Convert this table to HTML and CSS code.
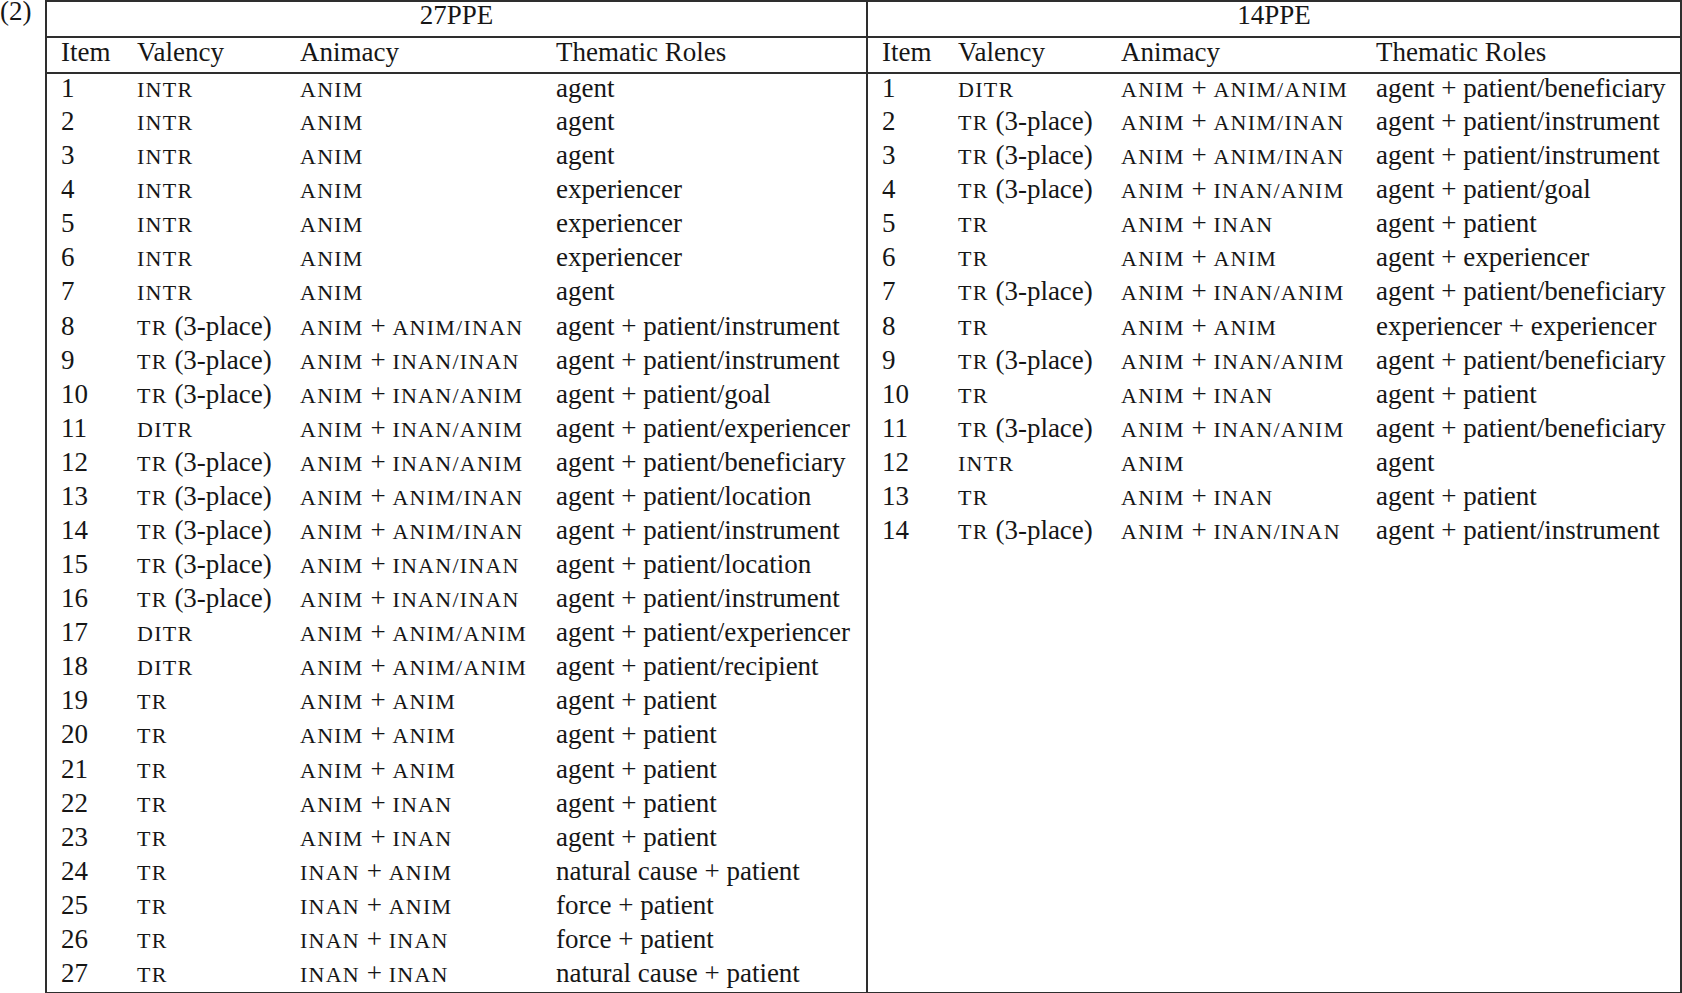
FILE: index.html
```html
<!DOCTYPE html>
<html lang="en">
<head>
<meta charset="utf-8">
<title>Table (2)</title>
<link rel="stylesheet" href="styles.css">
</head>
<body>
<div class="example">
  <div class="label">(2)</div>
  <table class="data">
    <colgroup>
      <col class="c-item">
      <col class="c-val">
      <col class="c-anim">
      <col class="c-role-l">
      <col class="c-item">
      <col class="c-val">
      <col class="c-anim-r">
      <col class="c-role-r">
    </colgroup>
    <thead>
      <tr class="group">
        <th colspan="4" class="split">27PPE</th>
        <th colspan="4">14PPE</th>
      </tr>
      <tr class="heads">
        <th class="first">Item</th><th>Valency</th><th>Animacy</th><th class="split">Thematic Roles</th>
        <th class="first">Item</th><th>Valency</th><th>Animacy</th><th>Thematic Roles</th>
      </tr>
    </thead>
    <tbody>
      <tr><td class="first">1</td><td><span class="sc">INTR</span></td><td><span class="sc">ANIM</span></td><td class="split">agent</td>
          <td class="first">1</td><td><span class="sc">DITR</span></td><td><span class="sc">ANIM</span> + <span class="sc">ANIM/ANIM</span></td><td>agent + patient/beneficiary</td></tr>
      <tr><td class="first">2</td><td><span class="sc">INTR</span></td><td><span class="sc">ANIM</span></td><td class="split">agent</td>
          <td class="first">2</td><td><span class="sc">TR</span> (3-place)</td><td><span class="sc">ANIM</span> + <span class="sc">ANIM/INAN</span></td><td>agent + patient/instrument</td></tr>
      <tr><td class="first">3</td><td><span class="sc">INTR</span></td><td><span class="sc">ANIM</span></td><td class="split">agent</td>
          <td class="first">3</td><td><span class="sc">TR</span> (3-place)</td><td><span class="sc">ANIM</span> + <span class="sc">ANIM/INAN</span></td><td>agent + patient/instrument</td></tr>
      <tr><td class="first">4</td><td><span class="sc">INTR</span></td><td><span class="sc">ANIM</span></td><td class="split">experiencer</td>
          <td class="first">4</td><td><span class="sc">TR</span> (3-place)</td><td><span class="sc">ANIM</span> + <span class="sc">INAN/ANIM</span></td><td>agent + patient/goal</td></tr>
      <tr><td class="first">5</td><td><span class="sc">INTR</span></td><td><span class="sc">ANIM</span></td><td class="split">experiencer</td>
          <td class="first">5</td><td><span class="sc">TR</span></td><td><span class="sc">ANIM</span> + <span class="sc">INAN</span></td><td>agent + patient</td></tr>
      <tr><td class="first">6</td><td><span class="sc">INTR</span></td><td><span class="sc">ANIM</span></td><td class="split">experiencer</td>
          <td class="first">6</td><td><span class="sc">TR</span></td><td><span class="sc">ANIM</span> + <span class="sc">ANIM</span></td><td>agent + experiencer</td></tr>
      <tr><td class="first">7</td><td><span class="sc">INTR</span></td><td><span class="sc">ANIM</span></td><td class="split">agent</td>
          <td class="first">7</td><td><span class="sc">TR</span> (3-place)</td><td><span class="sc">ANIM</span> + <span class="sc">INAN/ANIM</span></td><td>agent + patient/beneficiary</td></tr>
      <tr><td class="first">8</td><td><span class="sc">TR</span> (3-place)</td><td><span class="sc">ANIM</span> + <span class="sc">ANIM/INAN</span></td><td class="split">agent + patient/instrument</td>
          <td class="first">8</td><td><span class="sc">TR</span></td><td><span class="sc">ANIM</span> + <span class="sc">ANIM</span></td><td>experiencer + experiencer</td></tr>
      <tr><td class="first">9</td><td><span class="sc">TR</span> (3-place)</td><td><span class="sc">ANIM</span> + <span class="sc">INAN/INAN</span></td><td class="split">agent + patient/instrument</td>
          <td class="first">9</td><td><span class="sc">TR</span> (3-place)</td><td><span class="sc">ANIM</span> + <span class="sc">INAN/ANIM</span></td><td>agent + patient/beneficiary</td></tr>
      <tr><td class="first">10</td><td><span class="sc">TR</span> (3-place)</td><td><span class="sc">ANIM</span> + <span class="sc">INAN/ANIM</span></td><td class="split">agent + patient/goal</td>
          <td class="first">10</td><td><span class="sc">TR</span></td><td><span class="sc">ANIM</span> + <span class="sc">INAN</span></td><td>agent + patient</td></tr>
      <tr><td class="first">11</td><td><span class="sc">DITR</span></td><td><span class="sc">ANIM</span> + <span class="sc">INAN/ANIM</span></td><td class="split">agent + patient/experiencer</td>
          <td class="first">11</td><td><span class="sc">TR</span> (3-place)</td><td><span class="sc">ANIM</span> + <span class="sc">INAN/ANIM</span></td><td>agent + patient/beneficiary</td></tr>
      <tr><td class="first">12</td><td><span class="sc">TR</span> (3-place)</td><td><span class="sc">ANIM</span> + <span class="sc">INAN/ANIM</span></td><td class="split">agent + patient/beneficiary</td>
          <td class="first">12</td><td><span class="sc">INTR</span></td><td><span class="sc">ANIM</span></td><td>agent</td></tr>
      <tr><td class="first">13</td><td><span class="sc">TR</span> (3-place)</td><td><span class="sc">ANIM</span> + <span class="sc">ANIM/INAN</span></td><td class="split">agent + patient/location</td>
          <td class="first">13</td><td><span class="sc">TR</span></td><td><span class="sc">ANIM</span> + <span class="sc">INAN</span></td><td>agent + patient</td></tr>
      <tr><td class="first">14</td><td><span class="sc">TR</span> (3-place)</td><td><span class="sc">ANIM</span> + <span class="sc">ANIM/INAN</span></td><td class="split">agent + patient/instrument</td>
          <td class="first">14</td><td><span class="sc">TR</span> (3-place)</td><td><span class="sc">ANIM</span> + <span class="sc">INAN/INAN</span></td><td>agent + patient/instrument</td></tr>
      <tr><td class="first">15</td><td><span class="sc">TR</span> (3-place)</td><td><span class="sc">ANIM</span> + <span class="sc">INAN/INAN</span></td><td class="split">agent + patient/location</td>
          <td class="first"></td><td></td><td></td><td></td></tr>
      <tr><td class="first">16</td><td><span class="sc">TR</span> (3-place)</td><td><span class="sc">ANIM</span> + <span class="sc">INAN/INAN</span></td><td class="split">agent + patient/instrument</td>
          <td class="first"></td><td></td><td></td><td></td></tr>
      <tr><td class="first">17</td><td><span class="sc">DITR</span></td><td><span class="sc">ANIM</span> + <span class="sc">ANIM/ANIM</span></td><td class="split">agent + patient/experiencer</td>
          <td class="first"></td><td></td><td></td><td></td></tr>
      <tr><td class="first">18</td><td><span class="sc">DITR</span></td><td><span class="sc">ANIM</span> + <span class="sc">ANIM/ANIM</span></td><td class="split">agent + patient/recipient</td>
          <td class="first"></td><td></td><td></td><td></td></tr>
      <tr><td class="first">19</td><td><span class="sc">TR</span></td><td><span class="sc">ANIM</span> + <span class="sc">ANIM</span></td><td class="split">agent + patient</td>
          <td class="first"></td><td></td><td></td><td></td></tr>
      <tr><td class="first">20</td><td><span class="sc">TR</span></td><td><span class="sc">ANIM</span> + <span class="sc">ANIM</span></td><td class="split">agent + patient</td>
          <td class="first"></td><td></td><td></td><td></td></tr>
      <tr><td class="first">21</td><td><span class="sc">TR</span></td><td><span class="sc">ANIM</span> + <span class="sc">ANIM</span></td><td class="split">agent + patient</td>
          <td class="first"></td><td></td><td></td><td></td></tr>
      <tr><td class="first">22</td><td><span class="sc">TR</span></td><td><span class="sc">ANIM</span> + <span class="sc">INAN</span></td><td class="split">agent + patient</td>
          <td class="first"></td><td></td><td></td><td></td></tr>
      <tr><td class="first">23</td><td><span class="sc">TR</span></td><td><span class="sc">ANIM</span> + <span class="sc">INAN</span></td><td class="split">agent + patient</td>
          <td class="first"></td><td></td><td></td><td></td></tr>
      <tr><td class="first">24</td><td><span class="sc">TR</span></td><td><span class="sc">INAN</span> + <span class="sc">ANIM</span></td><td class="split">natural cause + patient</td>
          <td class="first"></td><td></td><td></td><td></td></tr>
      <tr><td class="first">25</td><td><span class="sc">TR</span></td><td><span class="sc">INAN</span> + <span class="sc">ANIM</span></td><td class="split">force + patient</td>
          <td class="first"></td><td></td><td></td><td></td></tr>
      <tr><td class="first">26</td><td><span class="sc">TR</span></td><td><span class="sc">INAN</span> + <span class="sc">INAN</span></td><td class="split">force + patient</td>
          <td class="first"></td><td></td><td></td><td></td></tr>
      <tr><td class="first">27</td><td><span class="sc">TR</span></td><td><span class="sc">INAN</span> + <span class="sc">INAN</span></td><td class="split">natural cause + patient</td>
          <td class="first"></td><td></td><td></td><td></td></tr>
    </tbody>
  </table>
</div>
</body>
</html>
```

FILE: styles.css
```css
html, body {
  margin: 0;
  padding: 0;
  background: #ffffff;
}

body {
  font-family: "Liberation Serif", "Times New Roman", serif;
  font-size: 27px;
  color: #161616;
}

.example {
  display: flex;
  align-items: flex-start;
}

.label {
  width: 45px;
  flex: none;
  line-height: 22px;
}

.data {
  flex: none;
  width: 1636px;
  table-layout: fixed;
  border-collapse: collapse;
  border: 2px solid #2e2e2e;
}

.c-item { width: 91px; }
.c-val { width: 163px; }
.c-anim { width: 256px; }
.c-role-l { width: 311px; }
.c-anim-r { width: 255px; }
.c-role-r { width: 305px; }

.data th,
.data td {
  padding: 0;
  white-space: nowrap;
  text-align: left;
  vertical-align: top;
  font-weight: normal;
}

.data tr.group th {
  text-align: center;
  height: 34px;
  line-height: 26px;
  border-bottom: 2px solid #2e2e2e;
}

.data tr.heads th {
  height: 34px;
  line-height: 28px;
  border-bottom: 2px solid #2e2e2e;
}

.data tbody tr {
  height: 34.09px;
}

.data tbody td {
  line-height: 29px;
}

.data .first {
  padding-left: 14px;
}

.data .split {
  border-right: 2px solid #2e2e2e;
}

.sc {
  font-size: 22px;
  letter-spacing: 1.25px;
}
```
